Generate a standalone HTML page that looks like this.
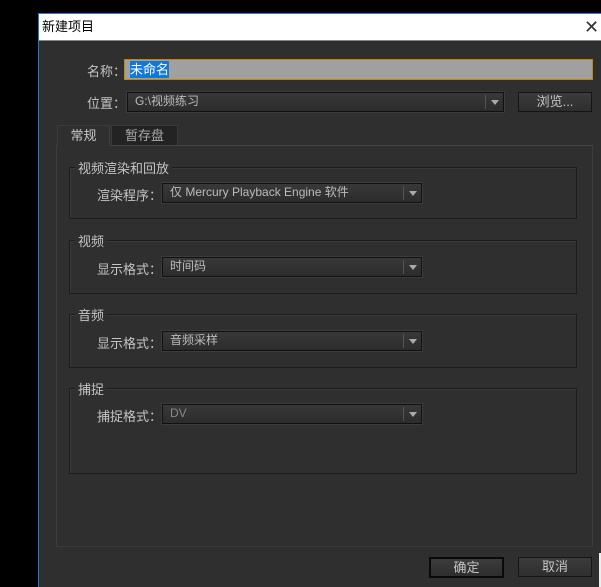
<!DOCTYPE html>
<html><head><meta charset="utf-8"><style>
*{box-sizing:border-box;margin:0;padding:0}
body{width:601px;height:587px;background:#000;position:relative;overflow:hidden;font-family:"Liberation Sans","Noto Sans CJK SC",sans-serif;font-size:13px;color:#c8c8c8}
.a{position:absolute}
.dlg{left:38px;top:13px;width:563px;height:574px;background:#2f2f2f;border-left:1px solid #1a7fd4;border-top:1px solid #1a7fd4}
.title{left:39px;top:14px;width:562px;height:27px;background:#fff;color:#000;font-size:13px;line-height:26px;padding-left:3px;border-bottom:1px solid #888}
.lbl{font-size:13px;color:#c4c4c4;text-align:right;white-space:nowrap}
.dd{background:linear-gradient(#383838,#2c2c2c);border:1px solid #111;box-shadow:0 0 0 1px #3c3c3c;color:#bbb;font-size:12px;line-height:17px;padding-left:7px}
.dd .arr{position:absolute;right:0;top:2px;width:18px;height:14px;border-left:1px solid #555}
.dd .arr:after{content:"";position:absolute;left:5px;top:5px;border-left:4px solid transparent;border-right:4px solid transparent;border-top:5px solid #aaa}
.grp{border:1px solid #1c1c1c;box-shadow:inset 1px 1px 0 #3a3a3a}
.gt{background:#2f2f2f;padding:0 3px;font-size:13px;color:#c4c4c4}
.btn{background:linear-gradient(#3c3c3c,#2e2e2e);border:1px solid #151515;text-align:center;color:#c4c4c4;line-height:18px;font-size:13px}
</style></head><body>
<div class="a dlg"></div>
<div class="a title">新建项目</div>
<div class="a" style="left:584px;top:17px;font-size:18px;color:#333;line-height:20px">✕</div>

<div class="a lbl" style="left:64px;top:61px;width:62px">名称：</div>
<div class="a" style="left:124px;top:59px;width:469px;height:21px;background:#a0a0a0;border:1px solid #c08a00"><span style="background:#1177dd;color:#fff;font-size:13px;line-height:17px;display:inline-block;margin:1px 0 0 5px">未命名</span></div>

<div class="a lbl" style="left:64px;top:93px;width:62px">位置：</div>
<div class="a dd" style="left:127px;top:92px;width:377px;height:20px">G:\视频练习<span class="arr"></span></div>
<div class="a btn" style="left:518px;top:92px;width:74px;height:20px">浏览...</div>

<div class="a" style="left:56px;top:145px;width:537px;height:402px;border:1px solid #3c3c3c;border-top-color:#444"></div>
<div class="a" style="left:57px;top:125px;width:53px;height:21px;background:#2f2f2f;border:1px solid #3c3c3c;border-bottom:none;text-align:center;line-height:20px">常规</div>
<div class="a" style="left:111px;top:125px;width:67px;height:20px;background:#232323;border:1px solid #3a3a3a;border-bottom:none;text-align:center;line-height:20px;color:#aaa">暂存盘</div>

<div class="a grp" style="left:69px;top:167px;width:508px;height:52px"></div>
<div class="a gt" style="left:75px;top:158px">视频渲染和回放</div>
<div class="a lbl" style="left:74px;top:185px;width:88px">渲染程序：</div>
<div class="a dd" style="left:162px;top:183px;width:260px;height:20px">仅 Mercury Playback Engine 软件<span class="arr"></span></div>

<div class="a grp" style="left:69px;top:240px;width:508px;height:54px"></div>
<div class="a gt" style="left:75px;top:231px">视频</div>
<div class="a lbl" style="left:74px;top:259px;width:88px">显示格式：</div>
<div class="a dd" style="left:162px;top:257px;width:260px;height:20px">时间码<span class="arr"></span></div>

<div class="a grp" style="left:69px;top:314px;width:508px;height:54px"></div>
<div class="a gt" style="left:75px;top:305px">音频</div>
<div class="a lbl" style="left:74px;top:333px;width:88px">显示格式：</div>
<div class="a dd" style="left:162px;top:331px;width:260px;height:20px">音频采样<span class="arr"></span></div>

<div class="a grp" style="left:69px;top:388px;width:508px;height:86px"></div>
<div class="a gt" style="left:75px;top:379px">捕捉</div>
<div class="a lbl" style="left:74px;top:406px;width:88px">捕捉格式：</div>
<div class="a dd" style="left:162px;top:404px;width:260px;height:20px;color:#888">DV<span class="arr"></span></div>

<div class="a btn" style="left:429px;top:557px;width:75px;height:21px;border:2px solid #0a0a0a">确定</div>
<div class="a btn" style="left:518px;top:557px;width:74px;height:20px">取消</div>
<div class="a" style="left:599px;top:553px;width:2px;height:34px;background:#eee"></div>
</body></html>
